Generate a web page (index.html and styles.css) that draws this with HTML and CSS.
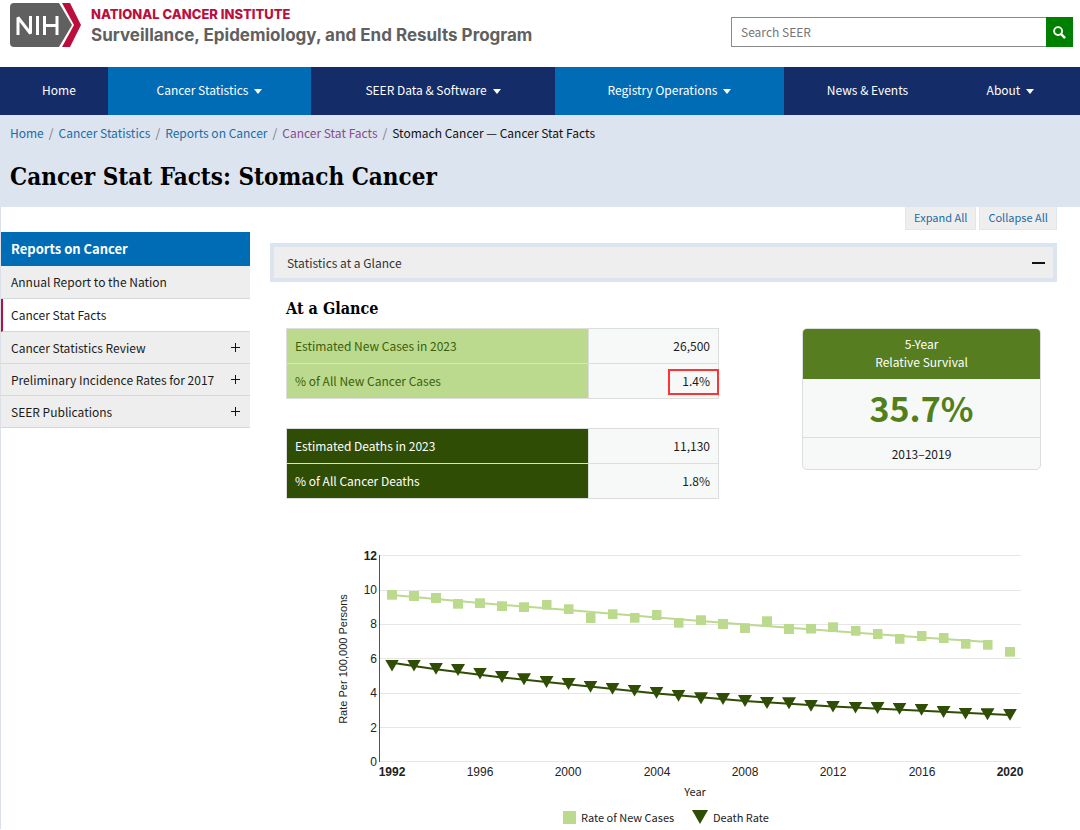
FILE: index.html
```html
<!DOCTYPE html>
<html lang="en">
<head>
<meta charset="utf-8">
<meta name="viewport" content="width=device-width, initial-scale=1">
<title>Cancer Stat Facts: Stomach Cancer</title>
<link rel="stylesheet" href="styles.css">
</head>
<body>
<header class="site-header">
  <a class="brand" href="#">
    <svg class="brand-mark" viewBox="0 0 72 46" aria-hidden="true">
      <path d="M4 1H49L62 23L49 45H4Q0 45 0 41V5Q0 1 4 1Z" fill="#606060"/>
      <path d="M52 1H60L71 23L60 45H52L64 23Z" fill="#bb0e3d"/>
      <g fill="none" stroke="#fff" stroke-width="3">
        <path d="M8 33V15.500L20.500 31.500V14" stroke-linejoin="bevel"/>
        <path d="M27.500 14V33M34.500 14V33M47 14V33M34.500 23.500H47"/>
      </g>
    </svg>
    <span class="brand-text">
      <span class="brand-org">NATIONAL CANCER INSTITUTE</span>
      <span class="brand-program">Surveillance, Epidemiology, and End Results Program</span>
    </span>
  </a>
  <form class="search" role="search">
    <input class="search-input" type="text" placeholder="Search SEER" aria-label="Search SEER">
    <button class="search-button" type="button" aria-label="Search">
      <svg viewBox="0 0 14 14" width="13" height="13" fill="none" stroke="#fff"><circle cx="5.500" cy="5.500" r="4.300" stroke-width="2"/><path d="M8.700 8.700L13 13" stroke-width="2.600"/></svg>
    </button>
  </form>
</header>

<nav class="main-nav" aria-label="Main">
  <a class="nav-link" href="#">Home</a>
  <a class="nav-link nav-active" href="#">Cancer Statistics <span class="caret"></span></a>
  <a class="nav-link" href="#">SEER Data &amp; Software <span class="caret"></span></a>
  <a class="nav-link nav-active" href="#">Registry Operations <span class="caret"></span></a>
  <a class="nav-link" href="#">News &amp; Events</a>
  <a class="nav-link" href="#">About <span class="caret"></span></a>
</nav>

<div class="banner">
  <nav aria-label="Breadcrumb">
    <ol class="crumbs">
      <li><a href="#">Home</a></li>
      <li><a href="#">Cancer Statistics</a></li>
      <li><a href="#">Reports on Cancer</a></li>
      <li><a class="visited" href="#">Cancer Stat Facts</a></li>
      <li>Stomach Cancer — Cancer Stat Facts</li>
    </ol>
  </nav>
  <h1 class="page-title">Cancer Stat Facts: Stomach Cancer</h1>
</div>

<div class="layout">
  <aside class="sidebar">
    <h2 class="side-title">Reports on Cancer</h2>
    <ul class="side-list">
      <li class="side-item side-leaf"><a href="#">Annual Report to the Nation</a></li>
      <li class="side-item side-leaf side-current"><a href="#">Cancer Stat Facts</a></li>
      <li class="side-item"><a href="#">Cancer Statistics Review</a><button class="plus" type="button" aria-label="Expand Cancer Statistics Review"></button></li>
      <li class="side-item"><a href="#">Preliminary Incidence Rates for 2017</a><button class="plus" type="button" aria-label="Expand Preliminary Incidence Rates"></button></li>
      <li class="side-item"><a href="#">SEER Publications</a><button class="plus" type="button" aria-label="Expand SEER Publications"></button></li>
    </ul>
  </aside>

  <main class="content">
    <div class="toggles">
      <button class="toggle" type="button">Expand All</button>
      <button class="toggle" type="button">Collapse All</button>
    </div>
    <button class="accordion" type="button" aria-expanded="true">Statistics at a Glance <span class="minus"></span></button>

    <section class="panel">
      <h2 class="section-title">At a Glance</h2>
      <div class="glance">
        <div class="tables">
          <table class="stats stats-cases">
            <tr><th scope="row">Estimated New Cases in 2023</th><td>26,500</td></tr>
            <tr><th scope="row">% of All New Cancer Cases</th><td class="marked">1.4%</td></tr>
          </table>
          <table class="stats stats-deaths">
            <tr><th scope="row">Estimated Deaths in 2023</th><td>11,130</td></tr>
            <tr><th scope="row">% of All Cancer Deaths</th><td>1.8%</td></tr>
          </table>
        </div>
        <div class="survival">
          <div class="survival-head">5-Year<br>Relative Survival</div>
          <div class="survival-value">35.7%</div>
          <div class="survival-years">2013–2019</div>
        </div>
      </div>

      <svg class="chart" viewBox="286 540 755 290" role="img" aria-label="Rate per 100,000 persons by year">
        <defs>
          <marker id="square" markerUnits="userSpaceOnUse" markerWidth="10" markerHeight="10" refX="5" refY="5"><rect width="10" height="10" fill="#bbda8d"/></marker>
          <marker id="triangle" markerUnits="userSpaceOnUse" markerWidth="14" markerHeight="12" refX="7" refY="0"><path d="M0 0H14L7 12Z" fill="#2f4d04"/></marker>
        </defs>
        <path class="grid" d="M380 556.500H1021M380 591.500H1021M380 625.500H1021M380 659.500H1021M380 694.500H1021M380 728.500H1021M380 762.500H1021"/>
        <path class="axis" d="M379.500 556V763"/>
        <g class="ticks ticks-y">
          <text class="tick-end" x="377" y="561">12</text><text x="377" y="595">10</text><text x="377" y="629">8</text><text x="377" y="664">6</text><text x="377" y="698">4</text><text x="377" y="733">2</text><text x="377" y="767">0</text>
        </g>
        <g class="ticks ticks-x">
          <text class="tick-end" x="392" y="777">1992</text><text x="480" y="777">1996</text><text x="568" y="777">2000</text><text x="657" y="777">2004</text><text x="745" y="777">2008</text><text x="833" y="777">2012</text><text x="922" y="777">2016</text><text class="tick-end" x="1010" y="777">2020</text>
        </g>
        <text class="axis-title" transform="rotate(-90 347 660)" x="347" y="660">Rate Per 100,000 Persons</text>
        <text class="axis-name" x="695" y="797">Year</text>

        <polyline class="trend-cases" points="392,596 480,604 568,611 657,618.500 745,625.500 833,632 922,638.500 988,643"/>
        <polyline class="points-cases" points="392,595.700 414,597 436,599 458,604.700 480,604.300 502,607.300 524,608.300 546.500,605.700 568.500,610.300 590.500,619 612.500,615.300 634.500,618.700 656.500,616 678.500,623.700 701,621.300 723,625 745,629.300 767,622.300 789,630 811,629.500 833,628.300 855.500,631.700 877.500,635 899.500,639.700 921.500,637 943.500,639 965.500,644.700 987.500,645.700 1010,652.700"/>
        <polyline class="trend-deaths" points="392,663.700 436,670.300 502,678.500 568,685.300 657,694.500 745,702 833,707.500 922,711.700 1010,716"/>
        <polyline class="points-deaths" points="392,660.500 414,660.500 436,663.700 458,665 480,668.500 502,672 524,674.300 546.500,677 568.500,679 590.500,681.700 612.500,683.700 634.500,685.500 656.500,687.700 678.500,690.700 701,693.300 723,694 745,696 767,698 789,698.300 811,700.700 833,701.500 855.500,702.500 877.500,703 899.500,703.700 921.500,704.700 943.500,707 965.500,708.500 987.500,709.300 1010,709.700"/>

        <rect x="563" y="812" width="13" height="13" fill="#bbda8d"/>
        <text class="legend" x="581" y="823">Rate of New Cases</text>
        <path d="M692 811H708L700 825Z" fill="#2f4d04"/>
        <text class="legend" x="713" y="823">Death Rate</text>
      </svg>
    </section>
  </main>
</div>
</body>
</html>
```
FILE: styles.css
```css
* { box-sizing: border-box; }

body {
  margin: 0;
  background: #fff;
  color: #1b1b1b;
  font: 12px/18px "Noto Sans CJK SC", "Noto Sans", sans-serif;
}

a { text-decoration: none; color: inherit; }
button { font: inherit; border: 0; padding: 0; cursor: pointer; }

.site-header {
  display: flex;
  justify-content: space-between;
  align-items: flex-start;
  height: 67px;
  padding: 2px 7px 0 10px;
}
.brand { display: flex; gap: 9px; }
.brand-mark { width: 72px; height: 46px; }
.brand-text { display: flex; flex-direction: column; font-family: Inter, sans-serif; }
.brand-org { color: #bb0e3d; font-size: 13px; line-height: 24px; font-weight: 800; }
.brand-program { color: #606060; font-size: 17px; line-height: 18px; font-weight: 700; }

.search { display: flex; width: 342px; height: 30px; margin-top: 15px; }
.search-input {
  flex: 1;
  min-width: 0;
  padding: 0 9px;
  border: 1px solid #8a8a8a;
  border-right: 0;
  font: inherit;
}
.search-input::placeholder { color: #757575; opacity: 1; }
.search-button { display: grid; place-items: center; width: 27px; background: #008000; border-radius: 0; }

.main-nav {
  display: grid;
  grid-template-columns: 98fr 203fr 244fr 229fr 167fr 119fr;
  padding: 0 10px;
  background: #142c67;
}
.nav-link {
  display: flex;
  align-items: center;
  justify-content: center;
  gap: 6px;
  height: 48px;
  padding-bottom: 2px;
  color: #fff;
}
.nav-active { background: #006cb5; }
.caret { margin-top: 2px; border: 4px solid transparent; border-top: 5px solid #fff; border-bottom: 0; }

.banner { background: #dce4ef; padding: 9px 10px 12px; }
.crumbs { display: flex; margin: 0; padding: 0; list-style: none; color: #111; }
.crumbs li + li::before { content: "/"; padding: 0 5px; color: #777; }
.crumbs a { color: #1a6ca8; }
.crumbs .visited { color: #8a4a8c; }
.page-title { margin: 17px 0 0; color: #000; font: 700 24px/36px "DejaVu Serif Condensed", "DejaVu Serif", serif; }

.layout {
  display: grid;
  grid-template-columns: 249px minmax(0, 1fr);
  gap: 20px;
  padding-right: 23px;
  border-left: 1px solid #dce0e8;
}

.sidebar { padding-top: 25px; }
.side-title { margin: 0; padding: 8px 10px; background: #006cb5; color: #fff; font-size: 13px; line-height: 18px; }
.side-list { margin: 0; padding: 0; list-style: none; }
.side-item {
  display: flex;
  justify-content: space-between;
  align-items: center;
  min-height: 32px;
  padding: 6px 10px;
  background: #eee;
  border-bottom: 1px solid #d6d7d9;
}
.side-leaf { min-height: 33px; }
.side-current { background: #fff; border-left: 2px solid #bb0e3d; padding-left: 8px; }
.plus {
  width: 9px;
  height: 9px;
  background:
    linear-gradient(#111, #111) center / 9px 1px no-repeat,
    linear-gradient(#111, #111) center / 1px 9px no-repeat;
}

.toggles { display: flex; justify-content: flex-end; gap: 3px; }
.toggle {
  height: 23px;
  padding: 0 8px 2px;
  background: #eee;
  border: 1px solid #e1e7f0;
  border-top: 0;
  color: #1a6ca8;
  font-size: 11px;
}
.accordion {
  display: flex;
  justify-content: space-between;
  align-items: center;
  width: 100%;
  height: 39px;
  margin-top: 13px;
  padding: 0 8px 0 13px;
  background: #eee;
  border: 4px solid #dce4ef;
  color: #333;
}
.minus { width: 13px; height: 2px; background: #111; }

.panel { padding: 17px 16px 0; }
.section-title { margin: 0; color: #000; font: 700 16px/20px "DejaVu Serif Condensed", "DejaVu Serif", serif; }
.glance { display: flex; justify-content: space-between; align-items: flex-start; margin-top: 9px; }
.tables { flex: 0 1 433px; display: grid; gap: 29px; }

.stats { width: 100%; border-collapse: collapse; background: #f7f9f9; }
.stats th, .stats td { height: 35px; padding: 0 8px; border: 1px solid #dcdede; }
.stats th { width: 70%; text-align: left; font-weight: 400; }
.stats td { text-align: right; }
.stats-cases th { background: #bbda8d; color: #3c5f0c; }
.stats-deaths th { background: #2f4d04; color: #fff; }
.marked { position: relative; }
.marked::after { content: ""; position: absolute; inset: 5px -1px 3px auto; width: 51px; border: 2px solid #f33; box-sizing: border-box; }

.survival { flex: 0 1 239px; border: 1px solid #dcdede; border-radius: 5px; overflow: hidden; background: #f7f9f9; text-align: center; }
.survival-head { padding: 6px 0 8px; background: #567e20; color: #fff; }
.survival-value { height: 59px; border-bottom: 1px solid #dcdede; color: #51801a; font-size: 34px; line-height: 58px; font-weight: 700; }
.survival-years { height: 31px; line-height: 31px; }

.chart { display: block; width: 100%; margin-top: 40px; font: 12px "Liberation Sans", Arial, sans-serif; }
.chart text { fill: #222; }
.grid { stroke: #e6e6e6; }
.axis { stroke: #555; }
.ticks-y { text-anchor: end; }
.ticks-x, .axis-title, .axis-name { text-anchor: middle; }
.tick-end { font-weight: 700; }
.axis-title { font-size: 11px; }
.axis-name, .legend { font-size: 11px; font-family: "Noto Sans CJK SC", "Noto Sans", sans-serif; }
.chart polyline { fill: none; }
.trend-cases { stroke: #bbda8d; stroke-width: 2; }
.trend-deaths { stroke: #2f4d04; stroke-width: 2; }
.points-cases { marker: url(#square); }
.points-deaths { marker: url(#triangle); }
```
